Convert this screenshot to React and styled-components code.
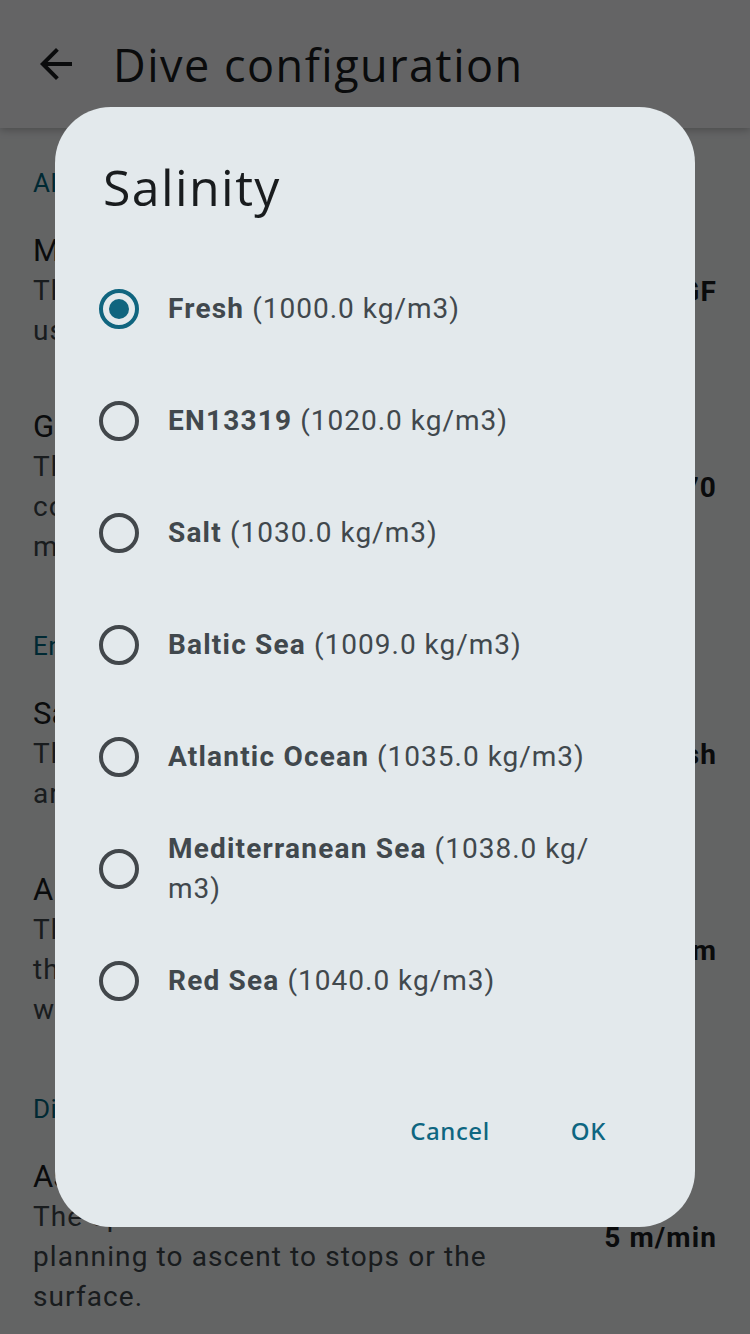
import React from 'react';
import styled, { createGlobalStyle } from 'styled-components';

const GlobalStyle = createGlobalStyle`
  html, body {
    margin: 0;
    padding: 0;
    width: 750px;
    height: 1334px;
    overflow: hidden;
    background: #f7f8fa;
    font-family: Roboto, "Noto Sans", sans-serif;
  }
`

const Page = styled.div`
  width: 750px;
  height: 1334px;
  background-color: #f7f9fb;
  overflow: hidden;
`
const AppBar = styled.header`
  height: 128px;
  display: flex;
  align-items: center;
  padding-left: 32px;
  background-color: #fafbfd;
  box-shadow: 0 2px 8px rgba(0, 0, 0, 0.25);
  position: relative;
`
const BackButton = styled.div`
  width: 48px;
  height: 48px;
  display: flex;
  align-items: center;
  justify-content: center;
  margin-right: 33px;
  color: #191c1e;
`
const AppTitle = styled.h1`
  margin: 0;
  font-family: "Open Sans", sans-serif;
  font-weight: 400;
  font-size: 45px;
  color: #191c1e;
  letter-spacing: 1.5px;
`
const Content = styled.div`
  padding: 0 33px;
`
const SectionHeader = styled.div`
  padding-top: ${p => p.$first ? '35px' : '31px'};
  height: 40px;
  line-height: 40px;
  font-size: 26px;
  color: #00677f;
  letter-spacing: 0.5px;
`
const Item = styled.div`
  display: flex;
  align-items: center;
  justify-content: space-between;
  padding: 28px 0;
`
const ItemText = styled.div`
  width: 470px;
`
const ItemTitle = styled.div`
  font-size: 31px;
  line-height: 40px;
  color: #191c1e;
`
const ItemDesc = styled.div`
  font-size: 28px;
  line-height: 40px;
  color: #40484c;
  letter-spacing: 1.1px;
`
const ItemValue = styled.div`
  font-size: 28px;
  font-weight: 700;
  color: #191c1e;
  letter-spacing: 1.1px;
`

const Scrim = styled.div`
  position: fixed;
  inset: 0;
  background-color: rgba(0, 0, 0, 0.6);
  display: flex;
  justify-content: center;
  align-items: flex-start;
  padding-top: 107px;
`
const Dialog = styled.div`
  width: 640px;
  height: 1120px;
  box-sizing: border-box;
  background-color: #e3e9ec;
  border-radius: 56px;
  display: flex;
  flex-direction: column;
  padding-top: 48px;
`
const DialogTitle = styled.h2`
  margin: 0 0 34px 48px;
  font-family: "Open Sans", sans-serif;
  font-weight: 400;
  font-size: 50px;
  line-height: 64px;
  letter-spacing: 1.4px;
  color: #191c1e;
`
const OptionList = styled.div`
  display: flex;
  flex-direction: column;
  padding-left: 44px;
`
const Option = styled.label`
  height: 112px;
  display: flex;
  align-items: center;
  gap: 29px;
`
const Radio = styled.span`
  flex: none;
  width: 40px;
  height: 40px;
  box-sizing: border-box;
  border-radius: 50%;
  border: 4px solid ${p => p.$checked ? '#10657f' : '#42474b'};
  display: flex;
  align-items: center;
  justify-content: center;
  &::after {
    content: '';
    width: 20px;
    height: 20px;
    border-radius: 50%;
    background-color: #10657f;
    display: ${p => p.$checked ? 'block' : 'none'};
  }
`
const OptionLabel = styled.span`
  width: 450px;
  font-size: 28px;
  line-height: 40px;
  color: #41484d;
  letter-spacing: 1px;
`
const OptionName = styled.b`
  font-weight: 700;
  letter-spacing: 1.2px;
`
const Actions = styled.div`
  margin-top: auto;
  margin-bottom: 73px;
  margin-right: 89px;
  display: flex;
  justify-content: flex-end;
  gap: 81px;
`
const TextButton = styled.button`
  border: none;
  background: none;
  padding: 0;
  height: 48px;
  font-family: "Noto Sans", sans-serif;
  font-size: 24px;
  font-weight: 500;
  color: #0e6681;
  letter-spacing: 0.6px;
`

const sections = [
  {
    title: 'Algorithm',
    items: [
      { title: 'Model', desc: 'The decompression model which uses gradient factors for the plan.', value: 'ZHL-16C GF' },
      { title: 'Gradient factors', desc: 'The factors that control how conservative the decompression model is.', value: '30/70' },
    ],
  },
  {
    title: 'Environment',
    items: [
      { title: 'Salinity', desc: 'The salinity of the water that you are diving in.', value: 'Fresh' },
      { title: 'Altitude', desc: 'The altitude above mean sea level that the water surface sits at, which affects decompression.', value: '0 m' },
    ],
  },
  {
    title: 'Dive planning',
    items: [
      { title: 'Ascent rate', desc: 'The speed at which the diver is planning to ascent to stops or the surface.', value: '5 m/min' },
    ],
  },
]

const options = [
  { name: 'Fresh', density: '(1000.0 kg/m3)' },
  { name: 'EN13319', density: '(1020.0 kg/m3)' },
  { name: 'Salt', density: '(1030.0 kg/m3)' },
  { name: 'Baltic Sea', density: '(1009.0 kg/m3)' },
  { name: 'Atlantic Ocean', density: '(1035.0 kg/m3)' },
  { name: 'Mediterranean Sea', density: '(1038.0 kg/m3)' },
  { name: 'Red Sea', density: '(1040.0 kg/m3)' },
]

const BackIcon = () => (
  <svg width="48" height="48" viewBox="0 0 24 24" fill="currentColor">
    <path d="M20 11H7.83l5.59-5.59L12 4l-8 8 8 8 1.41-1.41L7.83 13H20v-2z" />
  </svg>
)

const App = () => {
  const selected = 'Fresh'
  return (
    <Page>
      <GlobalStyle />
      <AppBar>
        <BackButton><BackIcon /></BackButton>
        <AppTitle>Dive configuration</AppTitle>
      </AppBar>
      <Content>
        {sections.map((s, i) => (
          <div key={s.title}>
            <SectionHeader $first={i === 0}>{s.title}</SectionHeader>
            {s.items.map(it => (
              <Item key={it.title}>
                <ItemText>
                  <ItemTitle>{it.title}</ItemTitle>
                  <ItemDesc>{it.desc}</ItemDesc>
                </ItemText>
                <ItemValue>{it.value}</ItemValue>
              </Item>
            ))}
          </div>
        ))}
      </Content>
      <Scrim>
        <Dialog>
          <DialogTitle>Salinity</DialogTitle>
          <OptionList>
            {options.map(o => (
              <Option key={o.name}>
                <Radio $checked={o.name === selected} />
                <OptionLabel>
                  <OptionName>{o.name}</OptionName> {o.density.replace('kg/', 'kg/\u200B')}
                </OptionLabel>
              </Option>
            ))}
          </OptionList>
          <Actions>
            <TextButton>Cancel</TextButton>
            <TextButton>OK</TextButton>
          </Actions>
        </Dialog>
      </Scrim>
    </Page>
  )
}

export default App
